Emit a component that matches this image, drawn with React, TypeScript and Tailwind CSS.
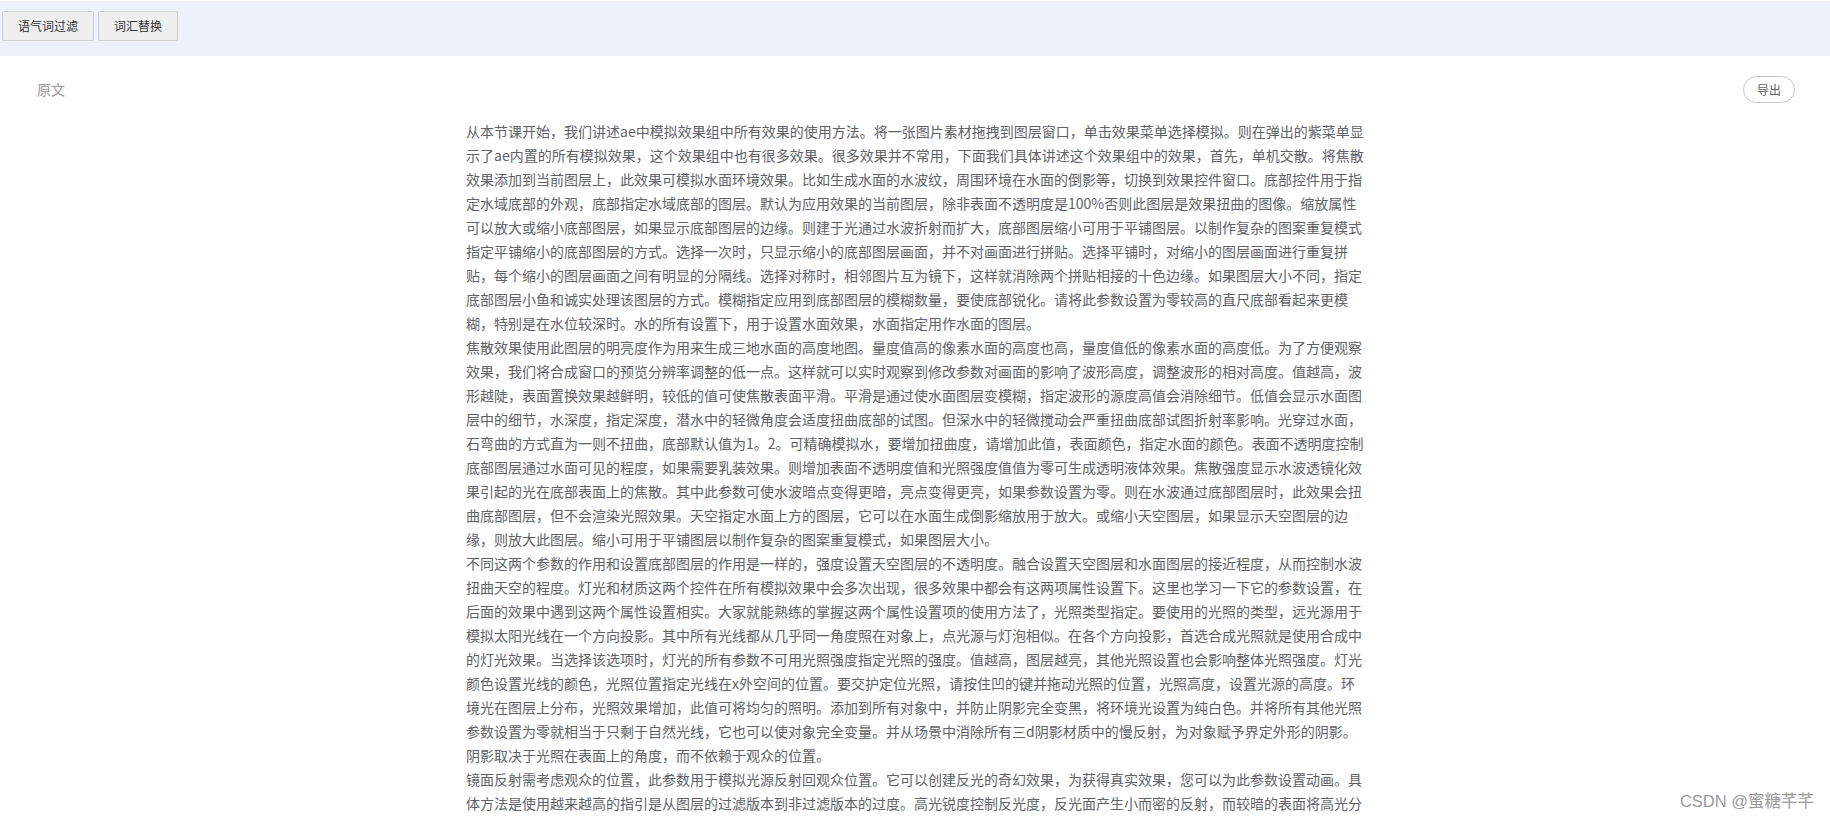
const paragraphs = [
  "从本节课开始，我们讲述ae中模拟效果组中所有效果的使用方法。将一张图片素材拖拽到图层窗口，单击效果菜单选择模拟。则在弹出的紫菜单显示了ae内置的所有模拟效果，这个效果组中也有很多效果。很多效果并不常用，下面我们具体讲述这个效果组中的效果，首先，单机交散。将焦散效果添加到当前图层上，此效果可模拟水面环境效果。比如生成水面的水波纹，周围环境在水面的倒影等，切换到效果控件窗口。底部控件用于指定水域底部的外观，底部指定水域底部的图层。默认为应用效果的当前图层，除非表面不透明度是100%否则此图层是效果扭曲的图像。缩放属性可以放大或缩小底部图层，如果显示底部图层的边缘。则建于光通过水波折射而扩大，底部图层缩小可用于平铺图层。以制作复杂的图案重复模式指定平铺缩小的底部图层的方式。选择一次时，只显示缩小的底部图层画面，并不对画面进行拼贴。选择平铺时，对缩小的图层画面进行重复拼贴，每个缩小的图层画面之间有明显的分隔线。选择对称时，相邻图片互为镜下，这样就消除两个拼贴相接的十色边缘。如果图层大小不同，指定底部图层小鱼和诚实处理该图层的方式。模糊指定应用到底部图层的模糊数量，要使底部锐化。请将此参数设置为零较高的直尺底部看起来更模糊，特别是在水位较深时。水的所有设置下，用于设置水面效果，水面指定用作水面的图层。",
  "焦散效果使用此图层的明亮度作为用来生成三地水面的高度地图。量度值高的像素水面的高度也高，量度值低的像素水面的高度低。为了方便观察效果，我们将合成窗口的预览分辨率调整的低一点。这样就可以实时观察到修改参数对画面的影响了波形高度，调整波形的相对高度。值越高，波形越陡，表面置换效果越鲜明，较低的值可使焦散表面平滑。平滑是通过使水面图层变模糊，指定波形的源度高值会消除细节。低值会显示水面图层中的细节，水深度，指定深度，潜水中的轻微角度会适度扭曲底部的试图。但深水中的轻微搅动会严重扭曲底部试图折射率影响。光穿过水面，石弯曲的方式直为一则不扭曲，底部默认值为1。2。可精确模拟水，要增加扭曲度，请增加此值，表面颜色，指定水面的颜色。表面不透明度控制底部图层通过水面可见的程度，如果需要乳装效果。则增加表面不透明度值和光照强度值值为零可生成透明液体效果。焦散强度显示水波透镜化效果引起的光在底部表面上的焦散。其中此参数可使水波暗点变得更暗，亮点变得更亮，如果参数设置为零。则在水波通过底部图层时，此效果会扭曲底部图层，但不会渲染光照效果。天空指定水面上方的图层，它可以在水面生成倒影缩放用于放大。或缩小天空图层，如果显示天空图层的边缘，则放大此图层。缩小可用于平铺图层以制作复杂的图案重复模式，如果图层大小。",
  "不同这两个参数的作用和设置底部图层的作用是一样的，强度设置天空图层的不透明度。融合设置天空图层和水面图层的接近程度，从而控制水波扭曲天空的程度。灯光和材质这两个控件在所有模拟效果中会多次出现，很多效果中都会有这两项属性设置下。这里也学习一下它的参数设置，在后面的效果中遇到这两个属性设置相实。大家就能熟练的掌握这两个属性设置项的使用方法了，光照类型指定。要使用的光照的类型，远光源用于模拟太阳光线在一个方向投影。其中所有光线都从几乎同一角度照在对象上，点光源与灯泡相似。在各个方向投影，首选合成光照就是使用合成中的灯光效果。当选择该选项时，灯光的所有参数不可用光照强度指定光照的强度。值越高，图层越亮，其他光照设置也会影响整体光照强度。灯光颜色设置光线的颜色，光照位置指定光线在x外空间的位置。要交护定位光照，请按住凹的键并拖动光照的位置，光照高度，设置光源的高度。环境光在图层上分布，光照效果增加，此值可将均匀的照明。添加到所有对象中，并防止阴影完全变黑，将环境光设置为纯白色。并将所有其他光照参数设置为零就相当于只剩于自然光线，它也可以使对象完全变量。并从场景中消除所有三d阴影材质中的慢反射，为对象赋予界定外形的阴影。阴影取决于光照在表面上的角度，而不依赖于观众的位置。",
  "镜面反射需考虑观众的位置，此参数用于模拟光源反射回观众位置。它可以创建反光的奇幻效果，为获得真实效果，您可以为此参数设置动画。具体方法是使用越来越高的指引是从图层的过滤版本到非过滤版本的过度。高光锐度控制反光度，反光面产生小而密的反射，而较暗的表面将高光分",
];

function App() {
  return (
    <main className="relative h-screen overflow-hidden bg-white font-['Noto_Sans_CJK_SC',sans-serif]">
      <div className="pt-px">
        {/* Toolbar */}
        <div className="flex h-[55px] items-start gap-[4px] bg-[#edf2fa] pl-[2px] pt-[10px]">
          <button className="h-[30px] w-[92px] rounded-[2px] border border-[#cfcfcf] bg-[#efefef] text-[12px] text-[#333]">
            语气词过滤
          </button>
          <button className="h-[30px] w-[80px] rounded-[2px] border border-[#cfcfcf] bg-[#efefef] text-[12px] text-[#333]">
            词汇替换
          </button>
        </div>

        <div className="ml-[2px] bg-[#fff]">
          <div className="flex items-center justify-between px-[35px] pt-[20px]">
            <span className="text-[14px] text-[#999]">原文</span>
            <button className="h-[27px] w-[52px] rounded-full border border-[#c0c4cc] bg-white text-[12px] text-[#606266]">
              导出
            </button>
          </div>

          {/* Transcript */}
          <div className="mx-auto mt-[16px] w-[900px] text-[14px] leading-[24px] text-[#606266]">
            {paragraphs.map((text, i) => (
              <p key={i}>{text}</p>
            ))}
          </div>
        </div>
      </div>

      {/* Watermark */}
      <div className="absolute bottom-[8px] right-[16px] font-['Liberation_Sans','Noto_Sans_CJK_SC',sans-serif] text-[16.5px] leading-[20px] text-[#999]">
        CSDN @蜜糖芊芊
      </div>
    </main>
  );
}

export default App;
